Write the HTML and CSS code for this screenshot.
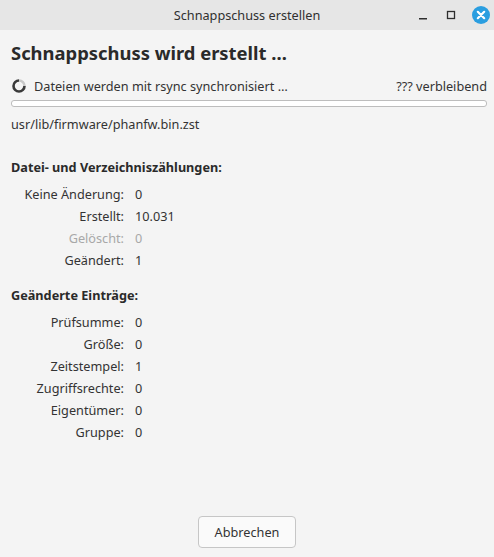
FILE: index.html
```html
<!DOCTYPE html>
<html lang="de">
<head>
<meta charset="utf-8">
<link rel="stylesheet" href="styles.css">
</head>
<body>
<div class="window">
  <div class="titlebar">
    <span class="title">Schnappschuss erstellen</span>
    <div class="controls">
      <svg class="ctl" width="16" height="16" viewBox="0 0 16 16"><rect x="4" y="11" width="8" height="1.5" fill="#2e2e2e"/></svg>
      <svg class="ctl" width="16" height="16" viewBox="0 0 16 16"><rect x="4.5" y="4.5" width="7" height="7" fill="none" stroke="#2e2e2e" stroke-width="1.3"/></svg>
      <svg class="ctl close" width="20" height="20" viewBox="0 0 20 20"><circle cx="10" cy="10" r="9" fill="#2a9ee0"/><path d="M6.8 6.8 L13.2 13.2 M13.2 6.8 L6.8 13.2" stroke="#fff" stroke-width="2.2" stroke-linecap="round"/></svg>
    </div>
  </div>
  <div class="content">
    <h1 class="heading">Schnappschuss wird erstellt …</h1>
    <div class="status">
      <svg class="spinner" width="14" height="14" viewBox="0 0 14 14"><path d="M7 1.5 A5.5 5.5 0 1 0 12.5 7" fill="none" stroke="#3a3a3a" stroke-width="2.6"/><path d="M12.5 7 A5.5 5.5 0 0 0 7 1.5" fill="none" stroke="#c8c8c8" stroke-width="2.6"/></svg>
      <span class="status-text">Dateien werden mit rsync synchronisiert …</span>
      <span class="remaining">??? verbleibend</span>
    </div>
    <div class="progress"></div>
    <div class="path">usr/lib/firmware/phanfw.bin.zst</div>

    <h2 class="section first">Datei- und Verzeichniszählungen:</h2>
    <div class="grid">
      <span class="label">Keine Änderung:</span><span class="value">0</span>
      <span class="label">Erstellt:</span><span class="value">10.031</span>
      <span class="label dim">Gelöscht:</span><span class="value dim">0</span>
      <span class="label">Geändert:</span><span class="value">1</span>
    </div>

    <h2 class="section second">Geänderte Einträge:</h2>
    <div class="grid">
      <span class="label">Prüfsumme:</span><span class="value">0</span>
      <span class="label">Größe:</span><span class="value">0</span>
      <span class="label">Zeitstempel:</span><span class="value">1</span>
      <span class="label">Zugriffsrechte:</span><span class="value">0</span>
      <span class="label">Eigentümer:</span><span class="value">0</span>
      <span class="label">Gruppe:</span><span class="value">0</span>
    </div>
  </div>
  <div class="footer">
    <button class="btn">Abbrechen</button>
  </div>
</div>
</body>
</html>
```
FILE: styles.css
```css
html, body {
  margin: 0;
  padding: 0;
}
body {
  width: 494px;
  height: 557px;
  background: #f4f4f4;
  font-family: "Noto Sans", "DejaVu Sans", sans-serif;
  color: #333333;
  font-size: 12.7px;
  overflow: hidden;
}
.window {
  height: 557px;
  display: flex;
  flex-direction: column;
}
.titlebar {
  height: 30px;
  flex: none;
  background: #e6e6e6;
  position: relative;
  display: flex;
  align-items: center;
  justify-content: center;
}
.title {
  font-size: 12.7px;
  color: #303030;
}
.controls {
  position: absolute;
  right: 3px;
  top: 5px;
  display: flex;
  align-items: center;
  gap: 12px;
}
.ctl {
  display: block;
}
.content {
  flex: 1;
  padding: 0 7px 0 11px;
}
.heading {
  margin: 10px 0 0 0;
  font-size: 18.4px;
  font-weight: 700;
  line-height: 26px;
  color: #2a2a2a;
}
.status {
  margin-top: 11px;
  display: flex;
  align-items: center;
  height: 18px;
}
.spinner {
  margin: 0 8px 0 1px;
}
.status-text {
  flex: 1;
}
.progress {
  margin-top: 5px;
  height: 5px;
  border: 1px solid #bdbdbd;
  border-radius: 3px;
  background: #ffffff;
}
.path {
  margin-top: 8px;
  line-height: 18px;
}
.section {
  font-size: 12.7px;
  font-weight: 700;
  line-height: 18px;
  color: #2a2a2a;
}
.section.first {
  margin: 25px 0 0 0;
}
.section.second {
  margin: 17px 0 0 0;
}
.grid {
  margin-top: 9px;
  display: grid;
  grid-template-columns: 113px auto;
  column-gap: 11px;
  row-gap: 4px;
  line-height: 18px;
}
.label {
  text-align: right;
}
.dim {
  color: #a8a8a8;
}
.footer {
  flex: none;
  display: flex;
  justify-content: center;
  padding-bottom: 9px;
}
.btn {
  width: 98px;
  height: 32px;
  font-family: inherit;
  font-size: 12.7px;
  color: #333333;
  background: #fafafa;
  border: 1px solid #c6c6c6;
  border-radius: 4px;
}
```
